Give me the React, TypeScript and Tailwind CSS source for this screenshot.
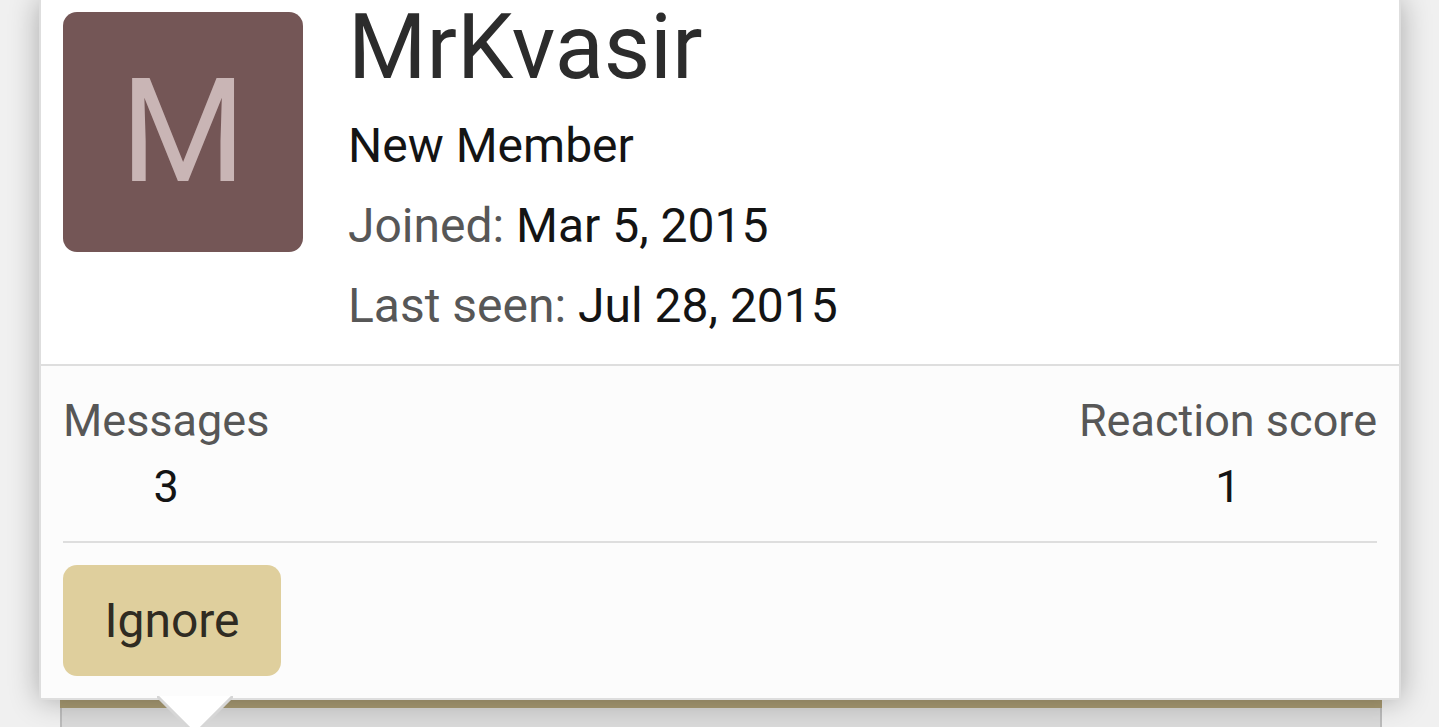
import React from "react";

const font = { fontFamily: "Roboto, 'Noto Sans', sans-serif" };

const InfoLine: React.FC<{ label?: string; value: string }> = ({ label, value }) => (
  <div className="text-[48px] leading-[80px] whitespace-nowrap">
    {label && <span className="text-[#575757]">{label} </span>}
    <span className="text-[#141414]">{value}</span>
  </div>
);

const Stat: React.FC<{ label: string; value: string }> = ({ label, value }) => (
  <dl className="flex flex-col items-center">
    <dt className="text-[45px] leading-[60px] text-[#575757]">{label}</dt>
    <dd className="text-[45px] leading-[72px] text-[#141414]">{value}</dd>
  </dl>
);

export default function App() {
  return (
    <div
      className="relative w-[1439px] h-[727px] overflow-hidden bg-[#f0f0f0]"
      style={font}
    >
      <div className="flex flex-col">
        {/* tooltip card */}
        <div className="relative z-10 ml-[39px] w-[1362px] border-x-2 border-b-2 border-[#dedede] bg-white shadow-[0_0_28px_rgba(0,0,0,0.3)]">
          <div className="flex gap-[45px] px-[22px] pb-[18px]">
            <div className="mt-[12px] flex h-[240px] w-[240px] shrink-0 items-center justify-center rounded-[14px] bg-[#745656] text-[144px] leading-[240px] text-[#c9b5b5]">
              M
            </div>
            <div className="flex flex-col">
              <h3 className="text-[90px] leading-[96px] text-[#2c2c2c] mb-[10px] font-normal">
                MrKvasir
              </h3>
              <InfoLine value="New Member" />
              <InfoLine label="Joined:" value="Mar 5, 2015" />
              <InfoLine label="Last seen:" value="Jul 28, 2015" />
            </div>
          </div>

          <div className="border-t-2 border-[#dedede] bg-[#fcfcfc] px-[22px] pt-[25px] pb-[22px]">
            <div className="flex justify-between border-b-2 border-[#dedede] pb-[18px]">
              <Stat label="Messages" value="3" />
              <Stat label="Reaction score" value="1" />
            </div>
            <div className="pt-[22px]">
              <button className="h-[111px] w-[218px] rounded-[14px] bg-[#dfcf9d] text-[48px] text-[#2f2b22]">
                Ignore
              </button>
            </div>
          </div>

          {/* pointer */}
          <svg
            className="absolute left-[116px] top-full -mt-[2px]"
            width="76"
            height="40"
            viewBox="0 0 76 40"
          >
            <polygon points="0,0 76,0 38,38" fill="#ffffff" />
            <polyline
              points="0,0 38,38 76,0"
              fill="none"
              stroke="#d6d6d6"
              strokeWidth="3"
            />
          </svg>
        </div>

        {/* page content under the tooltip */}
        <div className="ml-[60px] w-[1322px]">
          <div className="h-[8px] bg-[#a99b73]" />
          <div className="h-[40px] border-x-2 border-[#bcbcbc] bg-[#dadada]" />
        </div>
      </div>
    </div>
  );
}
